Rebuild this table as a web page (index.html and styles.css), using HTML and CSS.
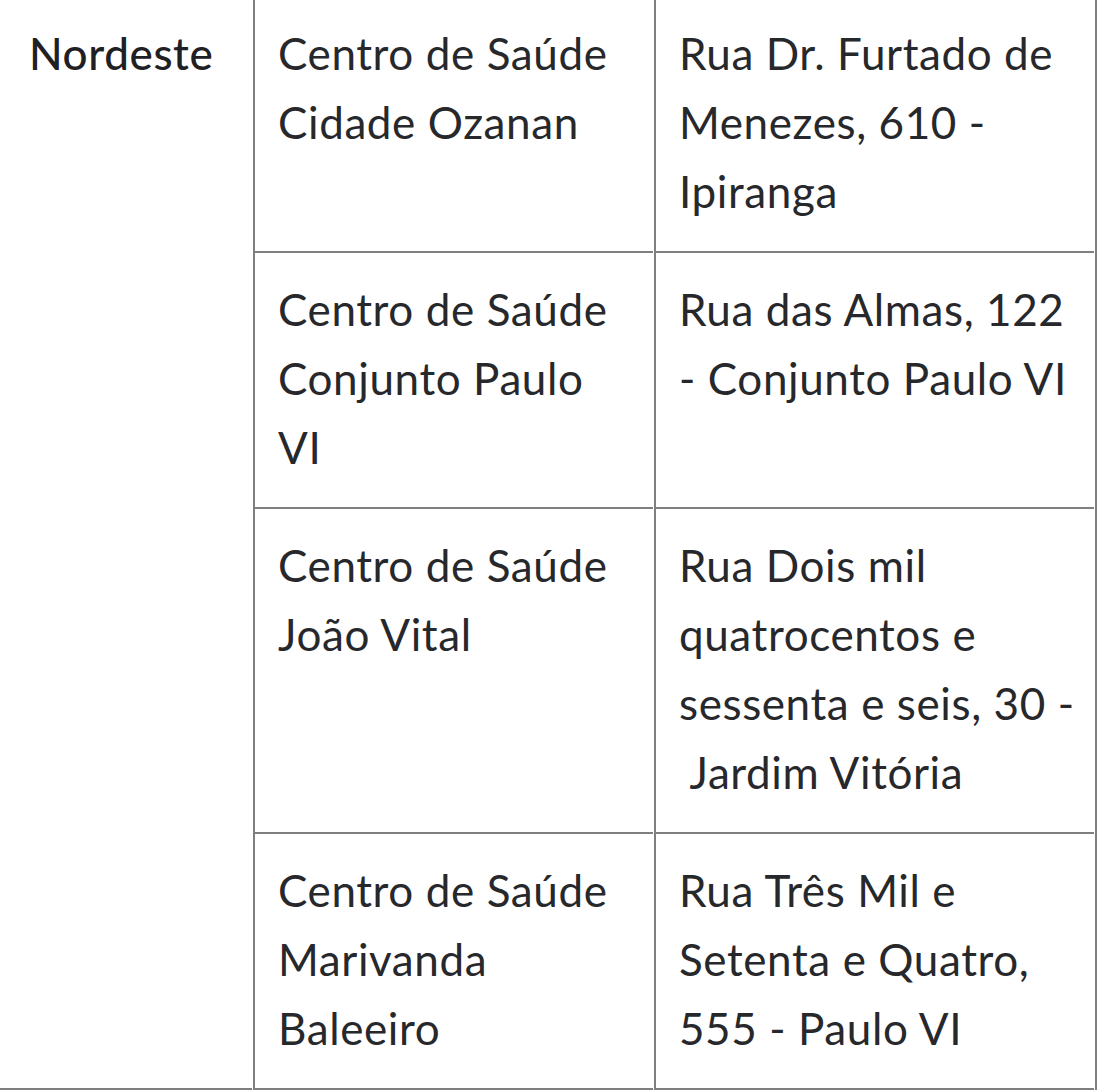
FILE: index.html
```html
<!DOCTYPE html>
<html lang="pt-BR">
<head>
<meta charset="utf-8">
<title>Centros de Saúde - Nordeste</title>
<link rel="stylesheet" href="styles.css">
</head>
<body>
<table class="units">
  <colgroup>
    <col class="col-region">
    <col class="col-name">
    <col class="col-address">
  </colgroup>
  <tbody>
    <tr>
      <th class="region" rowspan="4">Nordeste</th>
      <td class="cell cell-name">Centro de Saúde Cidade Ozanan</td>
      <td class="cell cell-address">Rua Dr. Furtado de Menezes, 610 - Ipiranga</td>
    </tr>
    <tr>
      <td class="cell cell-name">Centro de Saúde Conjunto Paulo VI</td>
      <td class="cell cell-address">Rua das Almas, 122 - Conjunto Paulo VI</td>
    </tr>
    <tr>
      <td class="cell cell-name">Centro de Saúde João Vital</td>
      <td class="cell cell-address">Rua Dois mil quatrocentos e sessenta e seis, 30 - &nbsp;Jardim Vitória</td>
    </tr>
    <tr>
      <td class="cell cell-name">Centro de Saúde Marivanda Baleeiro</td>
      <td class="cell cell-address">Rua Três Mil e Setenta e Quatro, 555 - Paulo VI</td>
    </tr>
  </tbody>
</table>
</body>
</html>
```
FILE: styles.css
```css
html, body {
  margin: 0;
  padding: 0;
  background: #ffffff;
}

body {
  font-family: Lato, "Open Sans", "Liberation Sans", sans-serif;
  font-size: 44px;
  line-height: 69px;
  letter-spacing: 0.6px;
  color: #27282b;
  overflow: hidden;
}

.units {
  table-layout: fixed;
  border-collapse: separate;
  border-spacing: 1px 0;
  border-right: 2px solid #7f7f7f;
  margin: -3px 0 0 -1px;
  width: 1098px;
}

.col-region { width: 252px; }
.col-name { width: 400px; }
.col-address { width: 440px; }

.region {
  text-align: left;
  vertical-align: top;
  font-weight: 500;
  color: #1f2023;
  padding: 22px 0 25px 29px;
  border-bottom: 2px solid #7f7f7f;
}

.cell {
  vertical-align: top;
  padding: 22px 22px 25px 23px;
  border-left: 2px solid #7f7f7f;
  border-bottom: 2px solid #7f7f7f;
}

.cell-address {
  padding-right: 16px;
}
```
